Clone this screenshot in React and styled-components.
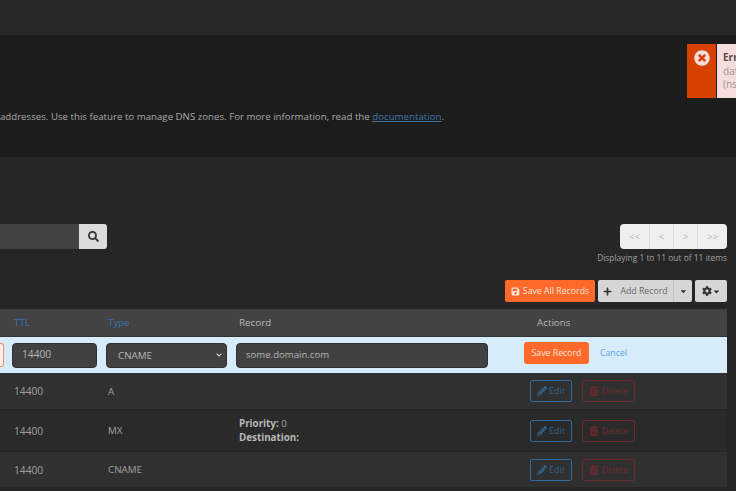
import React from "react"
import styled, { createGlobalStyle } from "styled-components"
import {
  FaSearch,
  FaSave,
  FaPlus,
  FaCaretDown,
  FaCog,
  FaPencilAlt,
  FaTrashAlt,
  FaTimesCircle,
  FaChevronDown,
} from "react-icons/fa"

const rows = [
  { ttl: "14400", type: "A", height: 37 },
  { ttl: "14400", type: "MX", height: 42, alt: true, mx: true },
  { ttl: "14400", type: "CNAME", height: 36 },
]

const App = () => {
  return (
    <Page>
      <GlobalStyle />
      <TopBar />
      <Hero>
        <HeroText>
          <span>
            addresses. Use this feature to manage DNS zones. For more information, read the{" "}
            <DocLink href="#">documentation</DocLink>.
          </span>
        </HeroText>
        <Alert>
          <AlertIcon>
            <FaTimesCircle />
          </AlertIcon>
          <AlertBody>
            <strong>Err</strong>
            <span>dat</span>
            <span>(ns</span>
          </AlertBody>
        </Alert>
      </Hero>
      <Main>
        <Toolbar>
          <SearchGroup>
            <SearchInput aria-label="Search" />
            <SearchButton>
              <FaSearch />
            </SearchButton>
          </SearchGroup>
          <PagerWrapper>
            <Pager>
              <PagerItem $width={30}>&lt;&lt;</PagerItem>
              <PagerItem $width={24}>&lt;</PagerItem>
              <PagerItem $width={24}>&gt;</PagerItem>
              <PagerItem $width={29}>&gt;&gt;</PagerItem>
            </Pager>
            <PagerText>Displaying 1 to 11 out of 11 items</PagerText>
          </PagerWrapper>
        </Toolbar>
        <ActionBar>
          <SaveAllButton>
            <FaSave />
            Save All Records
          </SaveAllButton>
          <AddGroup>
            <AddButton>
              <FaPlus />
              Add Record
            </AddButton>
            <CaretButton>
              <FaCaretDown />
            </CaretButton>
          </AddGroup>
          <GearButton>
            <FaCog />
            <FaCaretDown />
          </GearButton>
        </ActionBar>
        <Table>
          <HeaderRow>
            <span />
            <SortLabel>TTL</SortLabel>
            <SortLabel>Type</SortLabel>
            <HeaderLabel>Record</HeaderLabel>
            <ActionsLabel>Actions</ActionsLabel>
          </HeaderRow>
          <EditRow>
            <NameStub />
            <TextField defaultValue="14400" aria-label="TTL" />
            <SelectWrapper>
              <TypeSelect defaultValue="CNAME" aria-label="Type">
                <option>A</option>
                <option>MX</option>
                <option>CNAME</option>
              </TypeSelect>
              <FaChevronDown />
            </SelectWrapper>
            <RecordField defaultValue="some.domain.com" aria-label="Record" />
            <EditActions>
              <SaveRecordButton>Save Record</SaveRecordButton>
              <CancelLink href="#">Cancel</CancelLink>
            </EditActions>
          </EditRow>
          {rows.map((row, index) => (
            <DataRow key={index} $height={row.height} $alt={row.alt}>
              <span />
              <TtlCell>{row.ttl}</TtlCell>
              <Cell>{row.type}</Cell>
              <RecordCell>
                {row.mx && (
                  <>
                    <div>
                      <b>Priority:</b> 0
                    </div>
                    <div>
                      <b>Destination:</b>
                    </div>
                  </>
                )}
              </RecordCell>
              <RowActions>
                <EditButton>
                  <FaPencilAlt />
                  Edit
                </EditButton>
                <DeleteButton>
                  <FaTrashAlt />
                  Delete
                </DeleteButton>
              </RowActions>
            </DataRow>
          ))}
        </Table>
      </Main>
    </Page>
  )
}

export default App

const GlobalStyle = createGlobalStyle`
  html, body {
    margin: 0;
    height: 491px;
    overflow: hidden;
    background: #262626;
  }
  * {
    box-sizing: border-box;
  }
`

const Page = styled.div`
  width: 736px;
  height: 491px;
  overflow: hidden;
  font-family: "Open Sans", sans-serif;
  font-size: 9.8px;
  color: #b5b5b5;
  background: #262626;
`

const TopBar = styled.div`
  height: 35px;
  background: #272727;
`

const Hero = styled.div`
  position: relative;
  height: 122px;
  padding-top: 74px;
  background: #1c1c1c;
`

const HeroText = styled.div`
  display: flex;
  justify-content: flex-end;
  width: 444px;
  font-size: 9.7px;
  line-height: 15px;
  white-space: nowrap;
  color: #a8a8a8;
`

const DocLink = styled.a`
  color: #3f77a8;
  text-decoration: underline;
`

const Alert = styled.div`
  position: absolute;
  top: 9px;
  left: 687px;
  display: flex;
  width: 49px;
  height: 54px;
`

const AlertIcon = styled.div`
  display: flex;
  flex-shrink: 0;
  justify-content: center;
  width: 29px;
  padding-top: 6px;
  font-size: 16px;
  color: #f5dcdc;
  background: #d64000;
`

const AlertBody = styled.div`
  display: flex;
  flex: 1;
  flex-direction: column;
  margin-left: 1px;
  padding: 7px 0 0 6px;
  font-size: 10px;
  line-height: 13.5px;
  white-space: nowrap;
  color: #9a9292;
  background: #f5dddd;

  strong {
    color: #5c4a3e;
  }
`

const Main = styled.div`
  padding: 67px 9px 0 0;
`

const Toolbar = styled.div`
  display: flex;
  align-items: flex-start;
  justify-content: space-between;
`

const SearchGroup = styled.div`
  display: flex;
  height: 25px;
`

const SearchInput = styled.input`
  width: 79px;
  border: 0;
  background: #424242;
`

const SearchButton = styled.button`
  display: flex;
  align-items: center;
  justify-content: center;
  width: 28px;
  border: 0;
  border-radius: 0 3px 3px 0;
  font-size: 11px;
  color: #333333;
  background: #dcdcdc;
`

const PagerWrapper = styled.div`
  display: flex;
  flex-direction: column;
  align-items: flex-end;
  row-gap: 2px;
`

const Pager = styled.div`
  display: flex;
  height: 25px;
  border-radius: 4px;
  overflow: hidden;
  background: #efefef;
`

const PagerItem = styled.div`
  display: flex;
  align-items: center;
  justify-content: center;
  width: ${(props) => props.$width}px;
  border-right: 1px solid #e0e0e0;
  color: #b4b4b4;

  &:last-child {
    border-right: 0;
  }
`

const PagerText = styled.div`
  line-height: 14px;
  font-size: 8.4px;
  color: #a0a0a0;
`

const ActionBar = styled.div`
  display: flex;
  justify-content: flex-end;
  gap: 3px;
  height: 22px;
  margin-top: 15px;
`

const BaseButton = styled.button`
  display: flex;
  align-items: center;
  justify-content: center;
  height: 22px;
  padding: 0;
  border: 0;
  font-family: inherit;
  font-size: 8.75px;
`

const SaveAllButton = styled(BaseButton)`
  gap: 3px;
  width: 90px;
  border-radius: 2px;
  color: #f7e3d8;
  background: #ff6a2b;

  svg {
    font-size: 9px;
  }
`

const AddGroup = styled.div`
  display: flex;
  width: 94px;
`

const AddButton = styled(BaseButton)`
  gap: 8px;
  width: 76px;
  border-right: 1px solid #c4c4c4;
  border-radius: 2px 0 0 2px;
  color: #666666;
  background: #d6d6d6;

  svg {
    font-size: 9px;
    color: #333333;
  }
`

const CaretButton = styled(BaseButton)`
  width: 18px;
  border-radius: 0 2px 2px 0;
  color: #333333;
  background: #d6d6d6;
`

const GearButton = styled(BaseButton)`
  width: 32px;
  border-radius: 2px;
  font-size: 10px;
  color: #333333;
  background: #d6d6d6;

  svg:last-child {
    font-size: 9px;
  }
`

const Table = styled.div`
  margin-top: 7px;
`

const columns = `
  display: grid;
  grid-template-columns: 12px 94px 130px 288px 1fr;
  align-items: center;
`

const HeaderRow = styled.div`
  ${columns}
  height: 28px;
  border-bottom: 1px solid #333333;
  background: #434343;
`

const SortLabel = styled.span`
  padding-left: 2px;
  color: #3572b5;
`

const HeaderLabel = styled.span`
  padding-left: 3px;
  color: #b8b8b8;
`

const ActionsLabel = styled(HeaderLabel)`
  padding-left: 13px;
`

const EditRow = styled.div`
  ${columns}
  height: 36px;
  background: #d6ecfa;
`

const NameStub = styled.div`
  width: 4px;
  height: 24px;
  border: 1px solid #ff8a50;
  border-left: 0;
  border-radius: 0 3px 3px 0;
  background: #fdf3ee;
`

const TextField = styled.input`
  width: 85px;
  height: 25px;
  padding: 0 9px 2px;
  border: 1px solid #2f2f2f;
  border-radius: 4px;
  font-family: inherit;
  font-size: 10.2px;
  color: #b5b5b5;
  background: #414141;
`

const SelectWrapper = styled.div`
  position: relative;
  width: 121px;
  height: 25px;

  svg {
    position: absolute;
    top: 9px;
    right: 5px;
    font-size: 6px;
    color: #dddddd;
    pointer-events: none;
  }
`

const TypeSelect = styled.select`
  width: 100%;
  height: 100%;
  padding: 0 0 0 11px;
  border: 1px solid #2f2f2f;
  border-radius: 4px;
  appearance: none;
  font-family: inherit;
  font-size: 9.8px;
  color: #b5b5b5;
  background: #414141;
`

const RecordField = styled(TextField)`
  width: 252px;
  font-size: 9.6px;
`

const EditActions = styled.div`
  display: flex;
  align-self: flex-start;
  align-items: center;
  gap: 11px;
  margin-top: 5px;
`

const SaveRecordButton = styled(BaseButton)`
  width: 65px;
  border-radius: 3px;
  color: #f7e3d8;
  background: #ff6a2b;
`

const CancelLink = styled.a`
  font-size: 8.75px;
  color: #5fa3e8;
  text-decoration: none;
`

const DataRow = styled.div`
  ${columns}
  height: ${(props) => props.$height}px;
  border-bottom: 1px solid #262626;
  background: ${(props) => (props.$alt ? "#2a2a2a" : "#303030")};
`

const Cell = styled.div`
  padding-left: 2px;
  color: #a0a0a0;
`

const TtlCell = styled(Cell)`
  font-size: 10.2px;
`

const RecordCell = styled.div`
  padding-left: 3px;
  line-height: 14px;
  color: #a0a0a0;

  b {
    color: #b8b8b8;
  }
`

const RowActions = styled.div`
  display: flex;
  gap: 10px;
  padding-left: 6px;
`

const EditButton = styled(BaseButton)`
  gap: 2px;
  width: 42px;
  border: 1px solid #2f6ba3;
  border-radius: 2px;
  color: #2f6390;
  background: transparent;

  svg {
    font-size: 10px;
  }
`

const DeleteButton = styled(BaseButton)`
  gap: 3px;
  width: 53px;
  border: 1px solid #6a2a2e;
  border-radius: 2px;
  color: #6a2a2e;
  background: transparent;

  svg {
    font-size: 10px;
  }
`
